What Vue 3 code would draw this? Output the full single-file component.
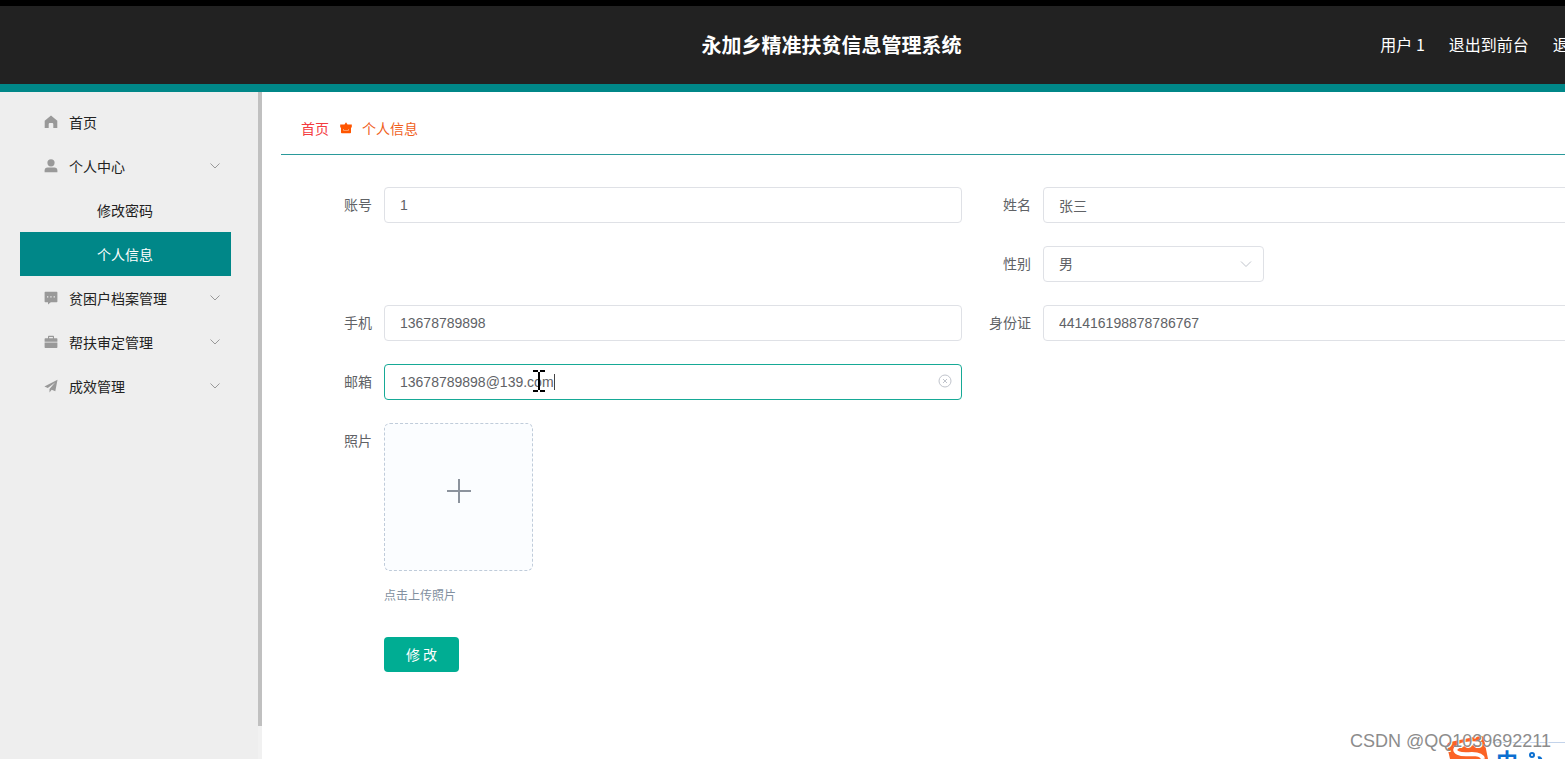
<script setup>
import { ref } from 'vue'

const account = ref('1')
const name = ref('张三')
const gender = ref('男')
const phone = ref('13678789898')
const idCard = ref('441416198878786767')
const email = ref('13678789898@139.com')

const menu = [
  { label: '首页', icon: 'home' },
  { label: '个人中心', icon: 'user', arrow: true },
  { label: '修改密码', child: true },
  { label: '个人信息', child: true, active: true },
  { label: '贫困户档案管理', icon: 'chat', arrow: true },
  { label: '帮扶审定管理', icon: 'case', arrow: true },
  { label: '成效管理', icon: 'send', arrow: true }
]
</script>

<template>
  <div class="viewport">
    <div class="page">
      <header class="header">
        <h1>永加乡精准扶贫信息管理系统</h1>
        <nav class="top-links">
          <span>用户 1</span>
          <a href="#">退出到前台</a>
          <a href="#">退出登录</a>
        </nav>
      </header>

      <div class="body">
        <aside class="sidebar">
          <nav class="menu">
            <a
              v-for="item in menu"
              :key="item.label"
              href="#"
              class="menu-item"
              :class="{ child: item.child, active: item.active }"
            >
              <svg v-if="item.icon" class="icon" viewBox="0 0 14 14" aria-hidden="true">
                <path v-if="item.icon === 'home'" d="M7 .5 13.300 5.700V13H9.300V9.200Q9.300 8 8.200 8H5.800Q4.700 8 4.700 9.200V13H.7V5.700Z" />
                <template v-else-if="item.icon === 'user'">
                  <circle cx="7" cy="3.800" r="3.600" />
                  <path d="M.6 13.200v-1.600Q.6 8.400 3.700 8.400h6.600q3.100 0 3.100 3.200v1.600Z" />
                </template>
                <path
                  v-else-if="item.icon === 'chat'"
                  fill-rule="evenodd"
                  d="M1.300.8h11.400q.7 0 .7.7v9q0 .7-.7.7H6.800L4 13.400V11.200H1.300q-.7 0-.7-.7v-9q0-.7.7-.7ZM3 5.300v1.300h1.300V5.300Zm3.300 0v1.300h1.300V5.300Zm3.300 0v1.300h1.300V5.300Z"
                />
                <path
                  v-else-if="item.icon === 'case'"
                  fill-rule="evenodd"
                  d="M4 3.300V1.500Q4 .8 4.700.8h4.600q.7 0 .7.7v1.800h2.700q.7 0 .7.7v2.700H.6V4q0-.7.7-.7ZM5.100 1.900v1.400h3.800V1.900ZM.6 7.600h12.800v4.700q0 .7-.7.7H1.300q-.7 0-.7-.7Z"
                />
                <path v-else d="M13.500.8.400 7.600l3.400 1.500 7.300-5.700-5.600 6.500v3.500l2.200-2.700 3.600 1.600Z" />
              </svg>
              <span class="menu-text">{{ item.label }}</span>
              <svg v-if="item.arrow" class="chevron" viewBox="0 0 12 12" aria-hidden="true">
                <path d="m1.500 3.500 4.500 4.500 4.500-4.500" />
              </svg>
            </a>
          </nav>
          <div class="scroll-track"><div class="scroll-thumb"></div></div>
        </aside>

        <main class="main">
          <nav class="crumbs">
            <a href="#" class="crumb-home">首页</a>
            <svg class="crumb-icon" viewBox="0 0 12 12" aria-hidden="true">
              <path d="M6 .2 7.500 2.400h4.300v3H11v5q0 .8-.8.8H1.800q-.8 0-.8-.8v-5H.2v-3h4.300Z" fill="#ff5500" />
              <path d="M3.500 7v1.500h5V7" fill="none" stroke="#ff9a62" stroke-width="1" />
            </svg>
            <span class="crumb-current">个人信息</span>
          </nav>

          <form class="form" @submit.prevent>
            <div class="field">
              <label for="account">账号</label>
              <div class="control"><input id="account" v-model="account" type="text" /></div>
            </div>
            <div class="field">
              <label for="name">姓名</label>
              <div class="control"><input id="name" v-model="name" type="text" /></div>
            </div>
            <div class="field right">
              <label for="gender">性别</label>
              <div class="control select">
                <select id="gender" v-model="gender">
                  <option>男</option>
                  <option>女</option>
                </select>
                <svg class="select-arrow" viewBox="0 0 12 12" aria-hidden="true">
                  <path d="m1 3.500 5 5 5-5" />
                </svg>
              </div>
            </div>
            <div class="field">
              <label for="phone">手机</label>
              <div class="control"><input id="phone" v-model="phone" type="text" /></div>
            </div>
            <div class="field">
              <label for="idcard">身份证</label>
              <div class="control"><input id="idcard" v-model="idCard" type="text" /></div>
            </div>
            <div class="field wide-row">
              <label for="email">邮箱</label>
              <div class="control">
                <input id="email" v-model="email" class="focused" type="text" />
                <span class="caret"></span>
                <svg class="pointer" viewBox="0 0 14 24" aria-hidden="true">
                  <path d="M1 2h5M8 2h5M1 22h5M8 22h5M7 3v18" />
                </svg>
                <button type="button" class="clear" aria-label="清空" @click="email = ''">
                  <svg viewBox="0 0 14 14" aria-hidden="true">
                    <circle cx="7" cy="7" r="6" />
                    <path d="m5 5 4 4M9 5 5 9" />
                  </svg>
                </button>
              </div>
            </div>
            <div class="field wide-row">
              <label for="photo">照片</label>
              <div class="control">
                <button id="photo" type="button" class="upload">
                  <svg viewBox="0 0 24 24" aria-hidden="true"><path d="M12 0v24M0 12h24" /></svg>
                </button>
                <p class="tip">点击上传照片</p>
                <button type="submit" class="submit">修 改</button>
              </div>
            </div>
          </form>
        </main>
      </div>
    </div>

    <div class="ime" aria-hidden="true">
      <svg class="ime-logo" viewBox="0 0 42 24">
        <path d="M1 11Q1 8 4 7L33 1Q37 0 38 4L42 24H4Z" fill="#fb6325" />
        <path d="M36 9Q22 7 13 11Q6 15 12 18Q16 20 26 19Q36 19 37 24" fill="none" stroke="#fff" stroke-width="4" />
      </svg>
      <div class="ime-bar">
        <span>中</span>
        <svg class="ime-punct" viewBox="0 0 18 10">
          <circle cx="6" cy="4" r="2" fill="none" stroke="#0b6fd0" stroke-width="2" />
          <path d="M12 7q3-1 3 3" fill="none" stroke="#0b6fd0" stroke-width="3" />
        </svg>
      </div>
    </div>
    <div class="watermark">CSDN @QQ1039692211</div>
  </div>
</template>

<style>
body {
  margin: 0;
  background: #fff;
}
</style>

<style scoped>
* {
  box-sizing: border-box;
}
.viewport {
  position: relative;
  min-height: 100vh;
  overflow: hidden;
  font-family: "Noto Sans CJK SC", sans-serif;
  font-size: 14px;
  color: #606266;
}
a {
  color: inherit;
  text-decoration: none;
}
button,
input,
select {
  font: inherit;
  margin: 0;
}
.page {
  display: flex;
  flex-direction: column;
  width: 106.25%;
  min-height: 100vh;
}
.header {
  display: grid;
  grid-template-columns: 1fr auto 1fr;
  align-items: center;
  height: 92px;
  padding: 0 46px;
  background: #222;
  border-top: 6px solid #000;
  border-bottom: 8px solid #008788;
  color: #fff;
}
.header h1 {
  grid-column: 2;
  margin: 0;
  font-size: 20px;
  font-weight: 700;
  line-height: 28px;
}
.top-links {
  display: flex;
  justify-content: flex-end;
  gap: 24px;
  padding-bottom: 2px;
  font-size: 16px;
  line-height: 24px;
  white-space: nowrap;
}
.body {
  display: flex;
  flex: 1;
}
.sidebar {
  display: flex;
  flex: none;
  width: 262px;
  background: #eee;
}
.menu {
  flex: 1;
  padding: 8px 27px 0 20px;
}
.menu-item {
  display: flex;
  align-items: center;
  height: 44px;
  padding: 0 10px 0 24px;
  color: #222;
  line-height: 20px;
}
.menu-item.child {
  padding-left: 77px;
}
.menu-item.active {
  background: #008788;
  color: #fff;
}
.icon {
  width: 14px;
  height: 14px;
  margin-right: 11px;
  fill: #999;
}
.menu-text {
  flex: 1;
  padding-bottom: 1px;
}
.chevron {
  width: 12px;
  height: 12px;
  fill: none;
  stroke: #999;
}
.scroll-track {
  width: 4px;
  background: #f1f1f1;
}
.scroll-thumb {
  height: 95%;
  background: #c0c0c0;
}
.main {
  flex: 1;
  padding: 12px 20px 0 19px;
}
.crumbs {
  display: flex;
  align-items: center;
  height: 51px;
  padding: 0 20px 2px;
  border-bottom: 1px solid #2a9a9b;
}
.crumb-home {
  color: #f43b3f;
}
.crumb-icon {
  width: 12px;
  height: 12px;
  margin: 0 10px 0 11px;
}
.crumb-current {
  color: #f0601c;
}
.form {
  display: grid;
  grid-template-columns: 1fr 1fr;
  row-gap: 23px;
  padding: 32px 22px 0;
}
.field {
  display: flex;
}
.field.right {
  grid-column: 2;
}
.field.wide-row {
  grid-column: 1;
}
.field label {
  flex: none;
  width: 81px;
  padding-right: 12px;
  line-height: 34px;
  text-align: right;
}
.control {
  position: relative;
  flex: 1;
}
.control input,
.control select {
  display: block;
  width: 100%;
  height: 36px;
  padding: 0 15px 1px;
  background: #fff;
  border: 1px solid #dfe1e6;
  border-radius: 4px;
  outline: none;
  color: #606266;
  font-family: "Liberation Sans", "Noto Sans CJK SC", sans-serif;
}
.control select {
  appearance: none;
}
.control.select {
  flex: none;
  width: 221px;
}
.select-arrow {
  position: absolute;
  top: 12px;
  right: 12px;
  width: 12px;
  height: 12px;
  fill: none;
  stroke: #c0c4cc;
}
.control input.focused {
  border-color: #16a996;
}
.caret {
  position: absolute;
  top: 10px;
  left: 170px;
  width: 1px;
  height: 16px;
  background: #444;
}
.pointer {
  position: absolute;
  top: 5px;
  left: 148px;
  width: 14px;
  height: 24px;
  fill: none;
  stroke: #000;
  stroke-width: 2;
}
.clear {
  position: absolute;
  top: 10px;
  right: 10px;
  width: 14px;
  height: 14px;
  padding: 0;
  background: none;
  border: 0;
}
.clear svg {
  display: block;
  fill: none;
  stroke: #c0c4cc;
}
.upload {
  display: flex;
  align-items: center;
  justify-content: center;
  width: 149px;
  height: 148px;
  padding: 0 0 12px;
  background: #fbfdff;
  border: 1px dashed #c0ccda;
  border-radius: 6px;
}
.upload svg {
  width: 24px;
  height: 24px;
  fill: none;
  stroke: #8c939d;
  stroke-width: 2;
}
.tip {
  margin: 14px 0 32px;
  color: #8290a0;
  font-size: 12px;
  line-height: 20px;
}
.submit {
  width: 75px;
  height: 35px;
  padding: 0 0 2px;
  background: #00ad93;
  border: 0;
  border-radius: 4px;
  color: #fff;
}
.ime {
  position: absolute;
  right: 0;
  bottom: 0;
  display: flex;
  align-items: flex-end;
  width: 119px;
  height: 24px;
  overflow: hidden;
}
.ime-logo {
  width: 42px;
  height: 24px;
}
.ime-bar {
  display: flex;
  flex: 1;
  height: 17px;
  padding-left: 8px;
  border-top: 1px solid #c3d3ea;
  color: #0b6fd0;
  font-size: 22px;
  font-weight: 700;
  line-height: 32px;
}
.ime-punct {
  width: 18px;
  height: 10px;
  margin-top: 8px;
  margin-left: 8px;
}
.watermark {
  position: absolute;
  right: 14px;
  bottom: 6px;
  color: #8c8c8c;
  font-family: "Liberation Sans", sans-serif;
  font-size: 18px;
  line-height: 24px;
  text-shadow: 1px 1px 0 #fff;
}
</style>
